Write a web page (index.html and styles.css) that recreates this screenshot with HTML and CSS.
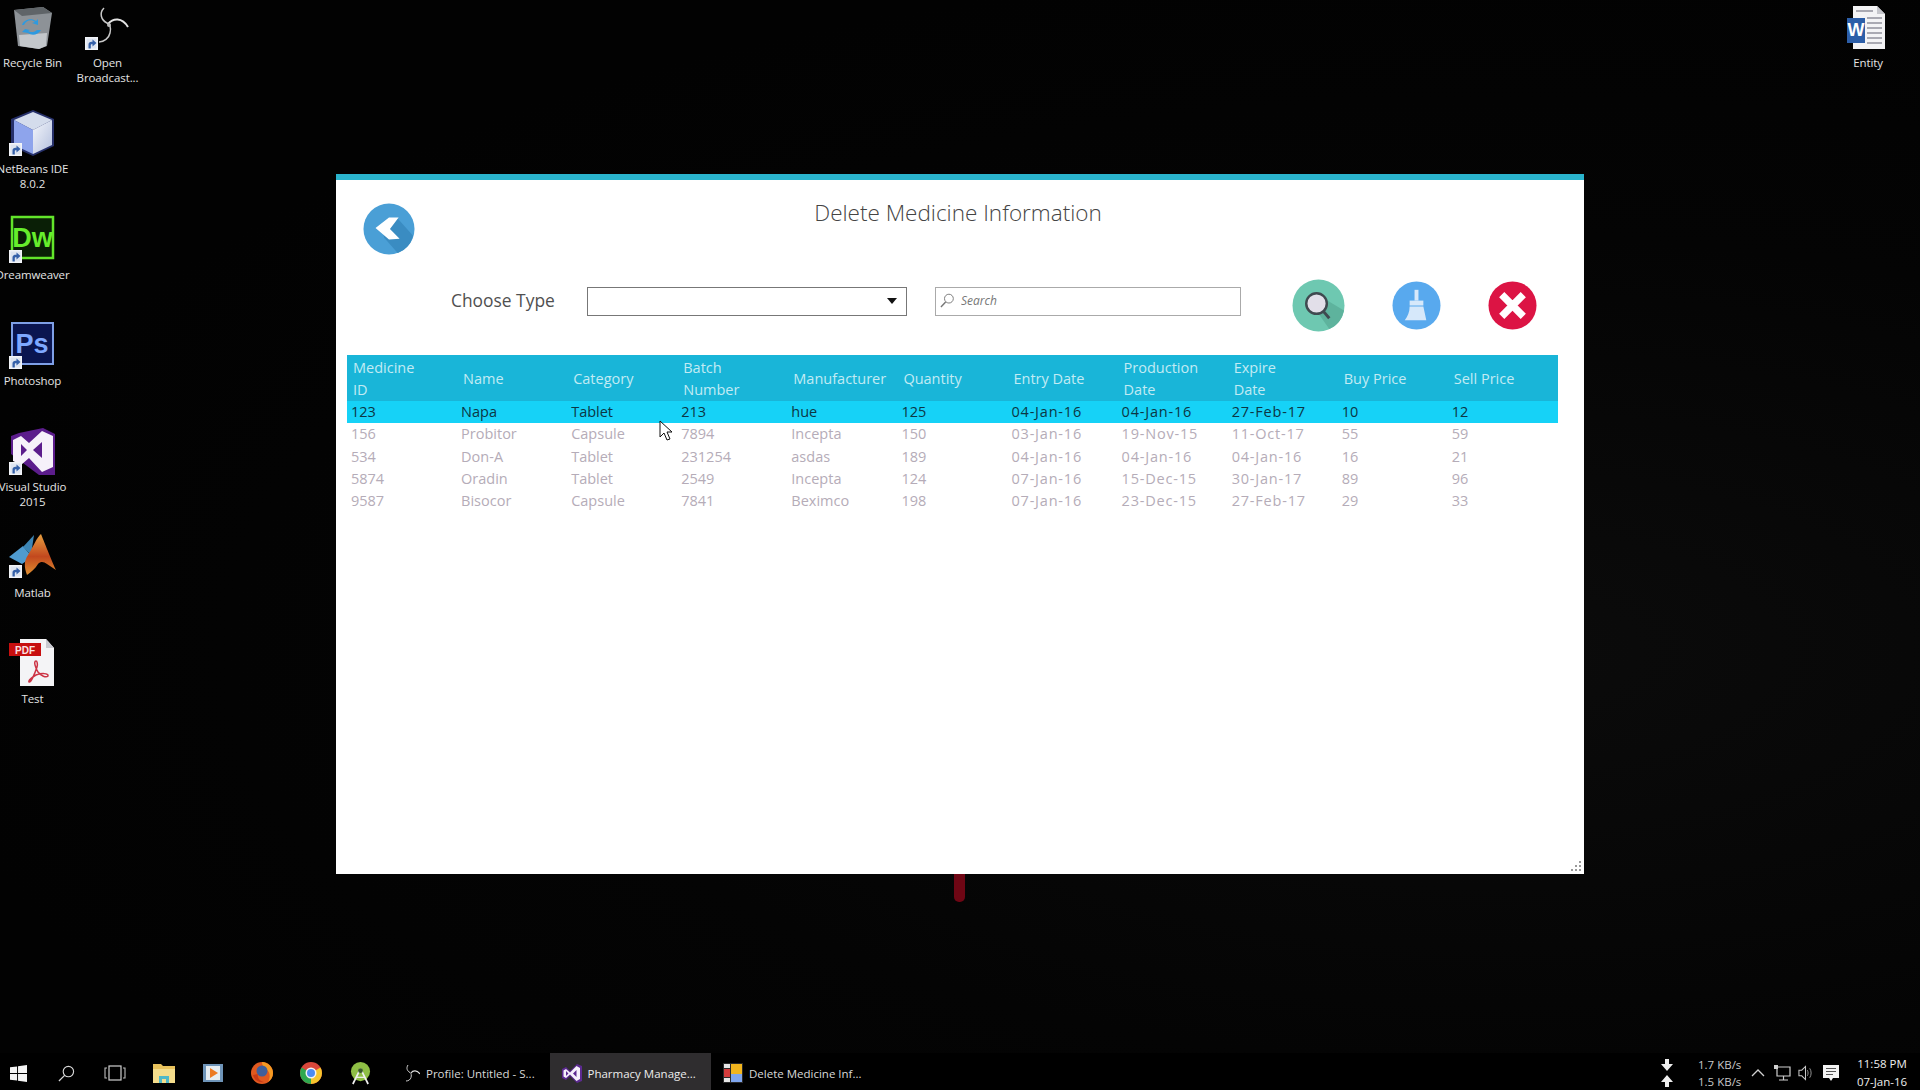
FILE: index.html
```html
<!DOCTYPE html>
<html lang="en">
<head>
    <meta charset="UTF-8">
    <title>Delete Medicine Information</title>
    <link rel="stylesheet" href="styles.css">
</head>
<body>
    <svg class="defs" width="0" height="0">
        <defs>
            <symbol id="shortcut" viewBox="0 0 13 13">
                <rect width="13" height="13" fill="#f2f4f8"/>
                <rect x="1.500" y="1.500" width="10" height="10" fill="#dde4f0"/>
                <path d="M3.500 11.500V7.500C3.500 5.800 4.800 4.800 6.500 4.800H7.500V2.500l4 3.500-4 3.500V7.300H6.800C6 7.300 5.800 7.800 5.800 8.500V11.500z" fill="#3560a8"/>
            </symbol>
            <linearGradient id="matlabGrad" x1="0" y1="0" x2="0" y2="1">
                <stop offset="0" stop-color="#e8a040"/>
                <stop offset="0.55" stop-color="#c2481e"/>
                <stop offset="1" stop-color="#e09030"/>
            </linearGradient>
            <linearGradient id="cubeGrad" x1="0" y1="0" x2="1" y2="1">
                <stop offset="0" stop-color="#f4f6fb"/>
                <stop offset="1" stop-color="#b4c0de"/>
            </linearGradient>
        </defs>
    </svg>

    <div class="desktop">
        <div class="icon-grid">
            <div class="desk-icon">
                <svg class="desk-svg" viewBox="0 0 48 48">
                    <path d="M5 7 34 4l9 6-5 33-8 3-21-3z" fill="#8d9297"/>
                    <path d="M5 7 34 4l9 6-30 3z" fill="#5f6468"/>
                    <path d="M10 32 38 30l-1 13-7 3-19-3z" fill="#c3c7cb"/>
                    <path d="M15 22c2-5 8-6 11-3l-3 1 6 2 0-6-2 2c-5-4-13-1-14 4zM16 26l-3 3 6 1c4 3 10 2 13-3l-4 0c-2 2-6 3-9 1l2-1z" fill="#2d9ae0"/>
                </svg>
                <span class="desk-label">Recycle Bin</span>
            </div>
            <div class="desk-icon">
                <svg class="desk-svg" viewBox="0 0 48 48">
                    <path d="M20 5C15 10 17 17 23 20c4 2 4 6 3 10-1 5-6 9-11 9" fill="none" stroke="#c8c8c8" stroke-width="1.500"/>
                    <path d="M24 21C29 15 38 14 44 24" fill="none" stroke="#e4e4e4" stroke-width="2"/>
                    <circle cx="25" cy="22" r="2" fill="#bbbbbb"/>
                    <use href="#shortcut" x="1" y="34" width="13" height="13"/>
                </svg>
                <span class="desk-label">Open Broadcast...</span>
            </div>
            <div class="desk-icon">
                <svg class="desk-svg" viewBox="0 0 48 48">
                    <path d="M24 1 45 10v27L24 47 2 37V10z" fill="#26306a"/>
                    <path d="M24 3 43 11 24 21 5 11z" fill="#d4dcec"/>
                    <path d="M5 11 24 21v24L5 36z" fill="#8ea4ec"/>
                    <path d="M43 11 24 21v24l19-9z" fill="url(#cubeGrad)"/>
                    <use href="#shortcut" x="0" y="34" width="13" height="13"/>
                </svg>
                <span class="desk-label">NetBeans IDE 8.0.2</span>
            </div>
            <div class="spacer"></div>
            <div class="desk-icon">
                <svg class="desk-svg" viewBox="0 0 48 48">
                    <rect x="3" y="2" width="41" height="41" fill="#0a1f06" stroke="#62e52a" stroke-width="2.500"/>
                    <text x="23.500" y="32" text-anchor="middle" class="app-text" fill="#66ee2c">Dw</text>
                    <use href="#shortcut" x="0" y="35" width="13" height="13"/>
                </svg>
                <span class="desk-label">Dreamweaver</span>
            </div>
            <div class="spacer"></div>
            <div class="desk-icon">
                <svg class="desk-svg" viewBox="0 0 48 48">
                    <rect x="3" y="2" width="41" height="41" fill="#0a1550" stroke="#7e9fe6" stroke-width="2"/>
                    <text x="23" y="32" text-anchor="middle" class="app-text" fill="#7ea8ff">Ps</text>
                    <use href="#shortcut" x="0" y="35" width="13" height="13"/>
                </svg>
                <span class="desk-label">Photoshop</span>
            </div>
            <div class="spacer"></div>
            <div class="desk-icon">
                <svg class="desk-svg" viewBox="0 0 48 48">
                    <path d="M34 1 46 7v41H30L2 27V9l8-3z" fill="#5c1d8c"/>
                    <path d="M33 4 44 9v31l-11 5-13-14-8 7-8-4V13l8-4 8 7zM12 17v12l6-6zM33 15l-9 8 9 8z" fill="#f6f1fa"/>
                    <use href="#shortcut" x="0" y="35" width="13" height="13"/>
                </svg>
                <span class="desk-label">Visual Studio 2015</span>
            </div>
            <div class="spacer"></div>
            <div class="desk-icon">
                <svg class="desk-svg" viewBox="0 0 48 48">
                    <path d="M0 24 14 13l9 11-10 7z" fill="#4f9bd0"/>
                    <path d="M14 14 25 2 22 22z" fill="#3d86b5"/>
                    <path d="M32 1C28 4 24 14 19 22c-4 6-4 12-1 20 4-3 8-6 11-11 3-3 6-2 9 0l9 6c-3-6-11-26-15-36z" fill="url(#matlabGrad)"/>
                    <use href="#shortcut" x="0" y="32" width="13" height="13"/>
                </svg>
                <span class="desk-label">Matlab</span>
            </div>
            <div class="spacer"></div>
            <div class="desk-icon">
                <svg class="desk-svg" viewBox="0 0 48 48">
                    <path d="M11 0H37L45 9V47H11z" fill="#f4f4f6"/>
                    <path d="M37 0 45 9H37z" fill="#c9c9cf"/>
                    <rect x="0" y="4" width="32" height="13" fill="#c70f0f"/>
                    <text x="16" y="14.500" text-anchor="middle" class="pdf-text" fill="#fbe2e2">PDF</text>
                    <path d="M27 22c-3 0 0 8 2 11 3 4 8 6 10 4 1-3-7-3-12-1-4 2-8 6-7 7 2 1 6-9 8-15 1-3 0-6-1-6z" fill="none" stroke="#cc3344" stroke-width="1.500"/>
                </svg>
                <span class="desk-label">Test</span>
            </div>
        </div>

        <div class="desk-icon entity">
            <svg class="desk-svg" viewBox="0 0 48 48">
                <path d="M9 3H33L41 11V46H9z" fill="#f3f3f5"/>
                <path d="M33 3 41 11H33z" fill="#c5c6cc"/>
                <path d="M23 15H38M23 20H38M23 25H38M23 30H38M23 35H38M23 40H38M12 8H29" stroke="#a9a9b2" stroke-width="2"/>
                <rect x="3" y="15" width="18" height="25" fill="#2c5ea8"/>
                <text x="12" y="33" text-anchor="middle" class="word-text" fill="#ffffff">W</text>
            </svg>
            <span class="desk-label">Entity</span>
        </div>

        <div class="red-mark"></div>

        <div class="window">
            <div class="title-row">
                <button class="round back">
                    <svg viewBox="0 0 54 54" width="52" height="52">
                        <circle cx="27" cy="27" r="26.500" fill="#4a9fd6"/>
                        <path d="M20 27 36 16 52 34A26 26 0 0 1 36 52L22 36z" fill="#3a8cc2"/>
                        <path d="M27 15 37 15 28 27 38 37 27 38 13 26z" fill="#ffffff"/>
                    </svg>
                </button>
                <h1 class="title">Delete Medicine Information</h1>
            </div>

            <div class="tool-row">
                <label class="type-label">Choose Type</label>
                <div class="select-box"><span class="caret"></span></div>
                <div class="search-box">
                    <svg viewBox="0 0 16 16" width="15" height="15">
                        <circle cx="9.500" cy="6" r="4.700" fill="none" stroke="#777" stroke-width="1"/>
                        <path d="M6 9.500 1 15" stroke="#777" stroke-width="1.500"/>
                    </svg>
                    <input class="search-input" type="text" placeholder="Search">
                </div>
                <button class="round find">
                    <svg viewBox="0 0 54 54" width="53" height="53">
                        <circle cx="27" cy="27" r="26.500" fill="#6ec8b1"/>
                        <path d="M26 34 36 22 53 32A26.500 26.500 0 0 1 38 51z" fill="#5eb39d"/>
                        <circle cx="25" cy="25" r="10.500" fill="#e2dfe9" stroke="#3f4a50" stroke-width="2.500"/>
                        <path d="M32 33 38 40" stroke="#3f4a50" stroke-width="3"/>
                    </svg>
                </button>
                <button class="round clean">
                    <svg viewBox="0 0 50 50" width="49" height="49">
                        <circle cx="25" cy="25" r="24.500" fill="#58a9ee"/>
                        <path d="M23 9h4v11h-4z" fill="#d6e8fa"/>
                        <path d="M18 20H32V25H18z" fill="#d6e8fa"/>
                        <path d="M18 26H32L35 40H13C16 36 18 32 18 26z" fill="#d6e8fa"/>
                    </svg>
                </button>
                <button class="round close">
                    <svg viewBox="0 0 50 50" width="49" height="49">
                        <circle cx="25" cy="25" r="24.500" fill="#dc1444"/>
                        <path d="M14 14 36 36M36 14 14 36" stroke="#ffffff" stroke-width="7.500"/>
                    </svg>
                </button>
            </div>

            <table class="med-table">
                <thead>
                    <tr>
                        <th>Medicine<br>ID</th>
                        <th>Name</th>
                        <th>Category</th>
                        <th>Batch<br>Number</th>
                        <th>Manufacturer</th>
                        <th>Quantity</th>
                        <th>Entry Date</th>
                        <th>Production<br>Date</th>
                        <th>Expire<br>Date</th>
                        <th>Buy Price</th>
                        <th>Sell Price</th>
                    </tr>
                </thead>
                <tbody>
                    <tr class="selected">
                        <td>123</td><td>Napa</td><td>Tablet</td><td>213</td><td>hue</td><td>125</td>
                        <td>04-Jan-16</td><td>04-Jan-16</td><td>27-Feb-17</td><td>10</td><td>12</td>
                    </tr>
                    <tr>
                        <td>156</td><td>Probitor</td><td>Capsule</td><td>7894</td><td>Incepta</td><td>150</td>
                        <td>03-Jan-16</td><td>19-Nov-15</td><td>11-Oct-17</td><td>55</td><td>59</td>
                    </tr>
                    <tr>
                        <td>534</td><td>Don-A</td><td>Tablet</td><td>231254</td><td>asdas</td><td>189</td>
                        <td>04-Jan-16</td><td>04-Jan-16</td><td>04-Jan-16</td><td>16</td><td>21</td>
                    </tr>
                    <tr>
                        <td>5874</td><td>Oradin</td><td>Tablet</td><td>2549</td><td>Incepta</td><td>124</td>
                        <td>07-Jan-16</td><td>15-Dec-15</td><td>30-Jan-17</td><td>89</td><td>96</td>
                    </tr>
                    <tr>
                        <td>9587</td><td>Bisocor</td><td>Capsule</td><td>7841</td><td>Beximco</td><td>198</td>
                        <td>07-Jan-16</td><td>23-Dec-15</td><td>27-Feb-17</td><td>29</td><td>33</td>
                    </tr>
                </tbody>
            </table>

            <svg class="grip" viewBox="0 0 10 10" width="10" height="10">
                <path d="M8 0h2v2H8zM8 4h2v2H8zM4 4h2v2H4zM8 8h2v2H8zM4 8h2v2H4zM0 8h2v2H0z" fill="#9a9a9a"/>
            </svg>
        </div>

        <svg class="cursor" viewBox="0 0 14 22" width="14" height="22">
            <path d="M1 1V17L5 13 8 20 11 19 8 12H13z" fill="#ffffff" stroke="#111111" stroke-width="1"/>
        </svg>
    </div>

    <div class="taskbar">
        <div class="start">
            <svg viewBox="0 0 18 18" width="17" height="17">
                <path d="M0 2.500 7.500 1.500V8.500H0zM8.500 1.300 18 0V8.500H8.500zM0 9.500H7.500V16.500L0 15.500zM8.500 9.500H18V18L8.500 16.700z" fill="#f4f4f4"/>
            </svg>
        </div>
        <div class="pin">
            <svg viewBox="0 0 18 18" width="17" height="17">
                <circle cx="11" cy="7" r="5.500" fill="none" stroke="#d8d8d8" stroke-width="1.200"/>
                <path d="M7 11 1 17" stroke="#d8d8d8" stroke-width="1.300"/>
            </svg>
        </div>
        <div class="pin">
            <svg viewBox="0 0 22 16" width="22" height="16">
                <rect x="5" y="1" width="12" height="14" fill="none" stroke="#cfcfcf" stroke-width="1.200"/>
                <path d="M3 3H1V13H3M19 3H21V13H19" fill="none" stroke="#bdbdbd" stroke-width="1.100"/>
            </svg>
        </div>
        <div class="pin">
            <svg viewBox="0 0 22 20" width="22" height="20">
                <path d="M0 1H8L10 3H22V20H0z" fill="#e8c25c"/>
                <path d="M0 6H22V20H0z" fill="#f4dd8c"/>
                <path d="M6 13H16V20H6z" fill="#4fb8c8"/>
                <path d="M9 16H13V20H9z" fill="#f4dd8c"/>
            </svg>
        </div>
        <div class="pin">
            <svg viewBox="0 0 20 20" width="20" height="20">
                <rect x="0" y="1" width="20" height="18" fill="#6e94b8"/>
                <rect x="3" y="3" width="14" height="14" fill="#e6edf2"/>
                <path d="M7 5 15 10 7 15z" fill="#ec7a22"/>
            </svg>
        </div>
        <div class="pin">
            <svg viewBox="0 0 22 22" width="22" height="22">
                <circle cx="11" cy="11" r="11" fill="#e0591f"/>
                <path d="M11 0C17 0 22 5 22 11 22 15 20 18 17 20 20 15 19 10 15 7 13 5 11 4 11 0z" fill="#f59a23"/>
                <circle cx="11" cy="9" r="5.500" fill="#3f5f9c"/>
                <path d="M2 13C3 18 8 21 13 20 8 19 6 15 7 12z" fill="#c83a16"/>
            </svg>
        </div>
        <div class="pin">
            <svg viewBox="0 0 22 22" width="22" height="22">
                <circle cx="11" cy="11" r="11" fill="#d9473b"/>
                <path d="M11 11 1.500 5.500A11 11 0 0 0 11 22z" fill="#2fa84f"/>
                <path d="M11 11V22A11 11 0 0 0 20.500 5.500z" fill="#f6c52c"/>
                <circle cx="11" cy="11" r="5.500" fill="#f4f4f4"/>
                <circle cx="11" cy="11" r="4" fill="#4c8bf0"/>
            </svg>
        </div>
        <div class="pin">
            <svg viewBox="0 0 22 24" width="21" height="23">
                <circle cx="11" cy="10" r="10" fill="#8fbf45"/>
                <path d="M11 7 3 23M11 7 19 23" stroke="#f0f0f0" stroke-width="1.800"/>
                <path d="M7 16H15" stroke="#f0f0f0" stroke-width="1.300"/>
                <circle cx="11" cy="9" r="2.500" fill="#3a5a2a"/>
            </svg>
        </div>

        <div class="task">
            <svg viewBox="0 0 20 20" width="20" height="20">
                <path d="M8 2C6 5 7 8 10 9.500c1.500 1 1.500 3 1 5-.5 2-2.500 3.500-5 3.500" fill="none" stroke="#cccccc" stroke-width="1"/>
                <path d="M11 10C13 7 17 7 20 11" fill="none" stroke="#dddddd" stroke-width="1.200"/>
            </svg>
            <span>Profile: Untitled - S...</span>
        </div>
        <div class="task active">
            <svg viewBox="0 0 20 20" width="20" height="20">
                <path d="M15 1 20 3V18L15 20 8 13 4 17 0 15V6L4 4 8 8z" fill="#5c2a90"/>
                <path d="M14.500 3 18 5V16L14.500 18 8 11.500 4 15 1.500 13.500V7.500L4 6 8 9.500zM4 8V13L6.500 10.500zM14.500 7 11 10.500 14.500 14z" fill="#f6f1fa"/>
            </svg>
            <span>Pharmacy Manage...</span>
        </div>
        <div class="task">
            <svg viewBox="0 0 20 20" width="20" height="20">
                <rect width="20" height="20" fill="#2a2a2a"/>
                <rect x="8" y="1" width="11" height="10" fill="#f2b51e"/>
                <rect x="8" y="11" width="11" height="8" fill="#7fa6ee"/>
                <rect x="1" y="6" width="6" height="8" fill="#d33b3b"/>
                <rect x="1" y="1" width="6" height="4" fill="#e6e6e6"/>
                <rect x="1" y="15" width="6" height="4" fill="#e6e6e6"/>
            </svg>
            <span>Delete Medicine Inf...</span>
        </div>

        <div class="tray">
            <div class="speed-arrows">
                <svg viewBox="0 0 12 12" width="12" height="12"><path d="M4 0H8V5H12L6 12 0 5H4z" fill="#eeeeee"/></svg>
                <svg viewBox="0 0 12 12" width="12" height="12"><path d="M4 12H8V7H12L6 0 0 7H4z" fill="#eeeeee"/></svg>
            </div>
            <div class="speed-text"><span>1.7 KB/s</span><span>1.5 KB/s</span></div>
            <svg class="tray-chevron" viewBox="0 0 14 8" width="14" height="8">
                <path d="M1 7 7 1 13 7" fill="none" stroke="#d0d0d0" stroke-width="1.300"/>
            </svg>
            <svg class="tray-net" viewBox="0 0 18 18" width="18" height="18">
                <path d="M4 3H17V12H4zM10.500 12V16M6 16H15" fill="none" stroke="#cfcfcf" stroke-width="1.200"/>
                <path d="M1 1H5V5H1z" fill="#cfcfcf"/>
            </svg>
            <svg class="tray-speaker" viewBox="0 0 16 16" width="15" height="16">
                <path d="M1 5H4L8 1V15L4 11H1z" fill="none" stroke="#c8c8c8" stroke-width="1.100"/>
                <path d="M10 5C11 7 11 9 10 11M12.500 3C14.500 6 14.500 10 12.500 13" fill="none" stroke="#9a9a9a" stroke-width="1"/>
            </svg>
            <svg class="tray-note" viewBox="0 0 16 17" width="16" height="17">
                <path d="M0 0H16V13H10L8 16 6 13H0z" fill="#f4f4f4"/>
                <path d="M3 3.500H13M3 6.500H13M3 9.500H10" stroke="#555" stroke-width="1.200"/>
            </svg>
            <div class="clock"><span>11:58 PM</span><span>07-Jan-16</span></div>
        </div>
    </div>
</body>
</html>
```

FILE: styles.css
```css
html, body {
    margin: 0;
    padding: 0;
    height: 100%;
}

body {
    display: flex;
    flex-direction: column;
    overflow: hidden;
    background-color: #020202;
    font-family: "Open Sans", "Noto Sans", sans-serif;
    color: #fff;
}

.defs {
    position: absolute;
}

.desktop {
    position: relative;
    flex: 1;
    overflow: hidden;
    background: radial-gradient(ellipse at 1500px 650px, #0b0b0b 0, #040404 45%, #020202 75%);
}

/* desktop icon grid, same 106px pitch as windows */
.icon-grid {
    display: grid;
    grid-template-columns: 75px 75px;
    grid-auto-rows: 106px;
    margin-left: -5px;
    width: 150px;
}

.desk-icon {
    display: flex;
    flex-direction: column;
    align-items: center;
    padding-top: 2.500px;
}

.desk-svg {
    width: 48px;
    height: 48px;
    margin-bottom: 4px;
}

.desk-label {
    width: 80px;
    font-size: 11.5px;
    line-height: 15px;
    text-align: center;
    color: #e4e4e4;
    letter-spacing: -0.1px;
}

.app-text {
    font-family: "Liberation Sans", sans-serif;
    font-size: 27px;
    font-weight: bold;
}

.pdf-text {
    font-family: "Liberation Sans", sans-serif;
    font-size: 10px;
    font-weight: bold;
}

.word-text {
    font-family: "Liberation Sans", sans-serif;
    font-size: 18px;
    font-weight: bold;
}

.entity {
    position: absolute;
    top: 0;
    left: 1828px;
    width: 80px;
}

.red-mark {
    position: absolute;
    left: 954px;
    top: 874px;
    width: 11px;
    height: 28px;
    border-radius: 0 0 5px 5px;
    background-color: #6e0614;
}

.window {
    position: absolute;
    left: 336px;
    top: 174px;
    width: 1248px;
    height: 700px;
    box-sizing: border-box;
    border-top: 6px solid #2ab4cd;
    background-color: #fff;
    color: #444;
}

.title-row {
    display: grid;
    grid-template-columns: 1fr auto 1fr;
    height: 74px;
    padding-right: 4px;
}

.round {
    border: none;
    padding: 0;
    background: none;
    display: flex;
}

.back {
    margin: 22.500px 0 0 27px;
    align-self: start;
    justify-self: start;
}

.title {
    margin: 15px 0 0 0;
    font-size: 22.500px;
    line-height: 36px;
    font-weight: 300;
    color: #444;
}

.tool-row {
    display: flex;
    align-items: center;
    height: 53px;
    margin-top: 25px;
}

.type-label {
    width: 136px;
    margin-left: 115px;
    margin-bottom: 11px;
    font-size: 17.400px;
    color: #505050;
}

.select-box {
    display: flex;
    align-items: center;
    justify-content: flex-end;
    box-sizing: border-box;
    width: 320px;
    height: 29px;
    margin-bottom: 9px;
    padding-right: 9px;
    border: 1px solid #777;
}

.caret {
    width: 0;
    height: 0;
    border-left: 5px solid transparent;
    border-right: 5px solid transparent;
    border-top: 6px solid #111;
}

.search-box {
    display: flex;
    align-items: center;
    gap: 6px;
    box-sizing: border-box;
    width: 306px;
    height: 29px;
    margin: 0 0 9px 28px;
    padding: 0 0 2px 4px;
    border: 1px solid #aaa;
}

.search-input {
    flex: 1;
    min-width: 0;
    border: none;
    outline: none;
    padding: 0;
    font-family: inherit;
    font-size: 12px;
    font-style: italic;
}

.search-input::placeholder {
    color: #777;
}

.find {
    margin-left: 51px;
}

.clean {
    margin-left: 47px;
}

.close {
    margin-left: 47px;
}

.med-table {
    width: 1211px;
    margin: 23px 0 0 11px;
    table-layout: fixed;
    border-collapse: collapse;
    font-size: 14.500px;
}

.med-table th {
    box-sizing: border-box;
    height: 46px;
    padding: 1px 6px 0;
    background-color: #19b5d8;
    color: #c2ebf4;
    font-weight: 400;
    line-height: 22px;
    text-align: left;
}

.med-table td {
    height: 22.300px;
    padding: 0 4px;
    line-height: 22px;
    color: #b5acb8;
    white-space: nowrap;
}

/* date columns run a bit wider in the original font */
.med-table td:nth-child(n+7):nth-child(-n+9) {
    letter-spacing: 0.8px;
}

.med-table .selected td {
    background-color: #16d2f7;
    color: #0c3644;
}

.grip {
    position: absolute;
    right: 3px;
    bottom: 3px;
}

.cursor {
    position: absolute;
    left: 659px;
    top: 420px;
}

.taskbar {
    display: flex;
    height: 37px;
    flex: none;
    background-color: #000;
    font-size: 11.500px;
    color: #d8d8d8;
}

.start {
    display: flex;
    align-items: center;
    justify-content: center;
    width: 36px;
    margin-right: 5.500px;
    padding-top: 3px;
}

.pin {
    display: flex;
    align-items: center;
    justify-content: center;
    width: 49px;
    padding-top: 3px;
}

.task {
    display: flex;
    align-items: center;
    gap: 6px;
    box-sizing: border-box;
    width: 161.500px;
    padding: 3px 0 0 12px;
    white-space: nowrap;
}

.pin + .task {
    margin-left: 3.500px;
}

.task.active {
    background-color: #2f2d2f;
    color: #ececec;
}

.tray {
    display: flex;
    align-items: center;
    margin-left: auto;
    padding: 3px 12px 0 0;
}

.speed-arrows {
    display: flex;
    flex-direction: column;
    gap: 4px;
    margin-right: 25px;
}

.speed-text,
.clock {
    display: flex;
    flex-direction: column;
    line-height: 18px;
    font-size: 11.500px;
    white-space: nowrap;
}

.clock {
    width: 52px;
    margin-left: 17px;
    align-items: center;
    color: #eeeeee;
}

.speed-text {
    width: 44px;
    line-height: 17px;
    color: #c8c8c8;
}

.tray-chevron {
    margin-left: 9px;
}

.tray-net {
    margin-left: 8px;
}

.tray-speaker {
    margin-left: 7px;
}

.tray-note {
    margin-left: 10px;
}
```
